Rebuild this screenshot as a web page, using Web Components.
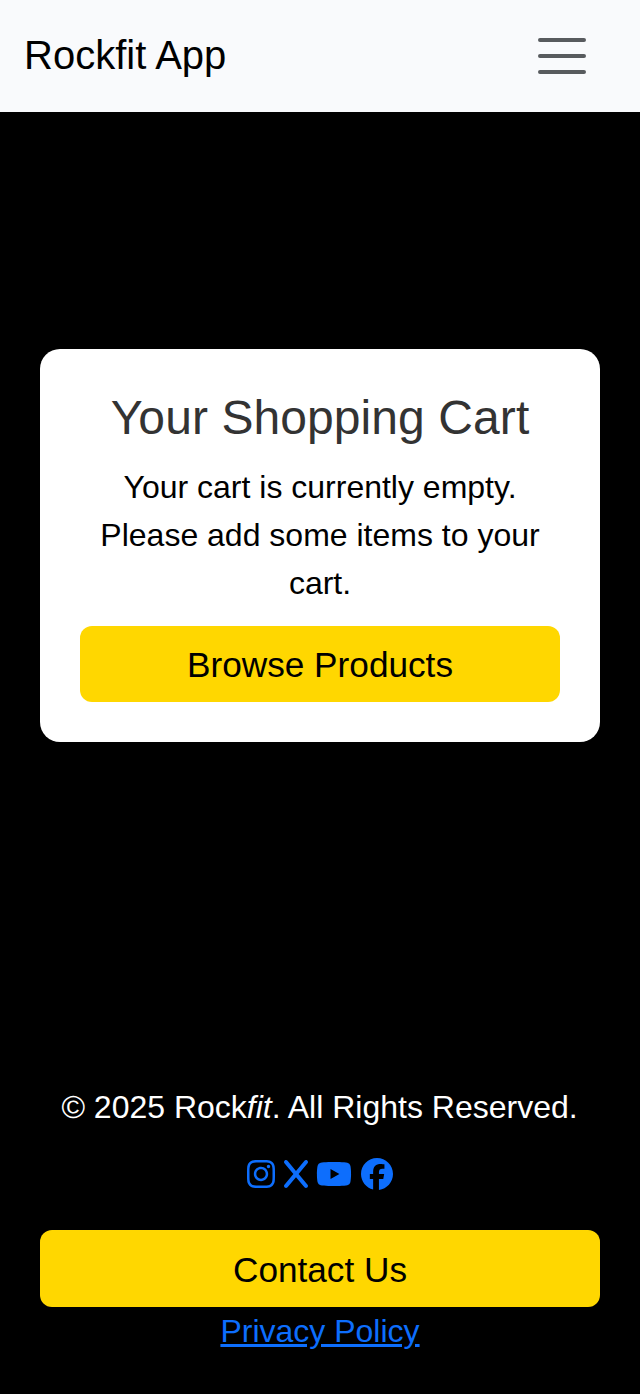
<!DOCTYPE html>
<html lang="en">
<head>
<meta charset="utf-8">
<title>Rockfit App</title>
<style>
html, body { margin: 0; background: #000; }
body { font-family: "Liberation Sans", Arial, sans-serif; font-size: 32px; line-height: 48px; }
</style>
</head>
<body>
<rockfit-page></rockfit-page>
<script>
function define(name, markup) {
  const template = document.createElement('template');
  template.innerHTML = markup;
  customElements.define(name, class extends HTMLElement {
    constructor() {
      super();
      this.attachShadow({ mode: 'open' }).appendChild(template.content.cloneNode(true));
    }
  });
}

define('app-navbar', `
<style>
:host { display: flex; box-sizing: border-box; height: 112px; align-items: center; justify-content: space-between; padding: 0 47.6px 0 24px; background: #f9fafc; color: #000; }
.brand { font-size: 40px; line-height: 60px; padding-bottom: 2px; }
button { border: 0; padding: 0; background: none; display: block; }
svg { display: block; width: 60px; height: 60px; }
</style>
<span class="brand"><slot></slot></span>
<button aria-label="Toggle navigation"><svg viewBox="0 0 30 30"><path fill="none" stroke="rgba(33,37,41,.75)" stroke-linecap="round" stroke-miterlimit="10" stroke-width="2" d="M4 7h22M4 15h22M4 23h22"/></svg></button>`);

define('gold-button', `
<style>
:host { display: flex; box-sizing: border-box; height: 76.6px; padding-top: 3px; align-items: center; justify-content: center; border-radius: 12px; background: #ffd700; color: #000; font-size: 35.2px; line-height: 52.8px; }
</style>
<slot></slot>`);

define('cart-card', `
<style>
:host { display: block; box-sizing: border-box; height: 393.2px; margin: 0 40px; padding: 40px; border-radius: 20px; background: #fff; color: #000; text-align: center; }
h2 { margin: 0 0 17px; font-size: 48px; font-weight: 400; line-height: 57.6px; letter-spacing: 0.08px; color: #333; }
p { margin: 0 0 18.2px; }
gold-button { height: 76.4px; }
</style>
<h2>Your Shopping Cart</h2>
<p>Your cart is currently empty. Please add some items to your cart.</p>
<gold-button>Browse Products</gold-button>`);

define('social-links', `
<style>
:host { display: flex; justify-content: center; align-items: center; gap: 8.9px; height: 32px; }
svg { display: block; height: 32px; fill: #0d6efd; }
</style>
<svg width="28" viewBox="0 0 448 512"><path d="M224.1 141c-63.6 0-114.9 51.3-114.9 114.9s51.3 114.9 114.9 114.9S339 319.5 339 255.900 287.700 141 224.100 141zm0 189.600c-41.100 0-74.700-33.500-74.700-74.700s33.500-74.700 74.700-74.700 74.700 33.500 74.700 74.700-33.600 74.700-74.700 74.700zm146.400-194.300c0 14.900-12 26.800-26.800 26.800-14.900 0-26.800-12-26.800-26.800s12-26.800 26.800-26.800 26.800 12 26.800 26.800zm76.100 27.200c-1.700-35.900-9.900-67.700-36.200-93.900-26.200-26.200-58-34.400-93.900-36.200-37-2.100-147.900-2.100-184.900 0-35.800 1.700-67.600 9.900-93.900 36.100s-34.400 58-36.200 93.900c-2.100 37-2.100 147.900 0 184.900 1.700 35.900 9.900 67.700 36.200 93.900s58 34.400 93.900 36.200c37 2.100 147.900 2.100 184.900 0 35.900-1.700 67.700-9.900 93.900-36.200 26.200-26.200 34.400-58 36.200-93.900 2.100-37 2.100-147.800 0-184.800zM398.800 388c-7.800 19.600-22.900 34.700-42.600 42.600-29.500 11.700-99.500 9-132.100 9s-102.700 2.600-132.100-9c-19.600-7.800-34.700-22.900-42.600-42.600-11.700-29.500-9-99.500-9-132.100s-2.600-102.700 9-132.100c7.800-19.600 22.900-34.700 42.600-42.600 29.500-11.700 99.500-9 132.100-9s102.700-2.600 132.100 9c19.600 7.800 34.700 22.900 42.600 42.600 11.700 29.500 9 99.500 9 132.100s2.700 102.700-9 132.100z"/></svg>
<svg width="24" viewBox="0 0 384 512"><path d="M376.6 84.5c11.300-13.600 9.500-33.800-4.100-45.100s-33.800-9.500-45.100 4.100L192 206 56.600 43.500C45.300 29.900 25.100 28.100 11.500 39.400S-3.900 70.900 7.400 84.500L150.300 256 7.400 427.500c-11.300 13.600-9.500 33.800 4.100 45.100s33.800 9.500 45.100-4.100L192 306 327.400 468.500c11.300 13.600 31.500 15.400 45.100 4.100s15.400-31.500 4.100-45.100L233.700 256 376.600 84.500z"/></svg>
<svg width="36" viewBox="0 0 576 512"><path d="M549.655 124.083c-6.281-23.650-24.787-42.276-48.284-48.597C458.781 64 288 64 288 64S117.220 64 74.629 75.486c-23.497 6.322-42.003 24.947-48.284 48.597-11.412 42.867-11.412 132.305-11.412 132.305s0 89.438 11.412 132.305c6.281 23.650 24.787 41.500 48.284 47.821C117.220 448 288 448 288 448s170.780 0 213.371-11.486c23.497-6.321 42.003-24.171 48.284-47.821 11.412-42.867 11.412-132.305 11.412-132.305s0-89.438-11.412-132.305zm-317.510 213.508V175.185l142.739 81.205-142.739 81.201z"/></svg>
<svg width="32" viewBox="0 0 512 512"><path d="M512 256C512 114.600 397.400 0 256 0S0 114.600 0 256C0 376 82.700 476.800 194.200 504.500V334.200H141.400V256h52.800V222.300c0-87.100 39.400-127.500 125-127.500c16.200 0 44.200 3.200 55.700 6.400V172c-6-.6-16.500-1-29.600-1c-42 0-58.200 15.900-58.200 57.200V256h83.600l-14.400 78.200H287V510.100C413.800 494.800 512 386.900 512 256h0z"/></svg>`);

define('app-footer', `
<style>
:host { display: block; padding: 0 40px; color: #fff; text-align: center; }
p { margin: 0 1px 27px 0; }
social-links { margin-bottom: 40.4px; }
.policy { display: block; color: #0d6efd; text-decoration: underline; text-decoration-thickness: 3px; }
</style>
<p>© 2025 Rock<em>fit</em>. All Rights Reserved.</p>
<social-links></social-links>
<gold-button>Contact Us</gold-button>
<a class="policy">Privacy Policy</a>`);

define('rockfit-page', `
<style>
:host { display: flex; flex-direction: column; box-sizing: border-box; height: 1394px; padding-bottom: 39px; background: #000; }
cart-card { margin-top: 236.800px; }
app-footer { margin-top: auto; }
</style>
<app-navbar>Rockfit App</app-navbar>
<cart-card></cart-card>
<app-footer></app-footer>`);
</script>
</body>
</html>
